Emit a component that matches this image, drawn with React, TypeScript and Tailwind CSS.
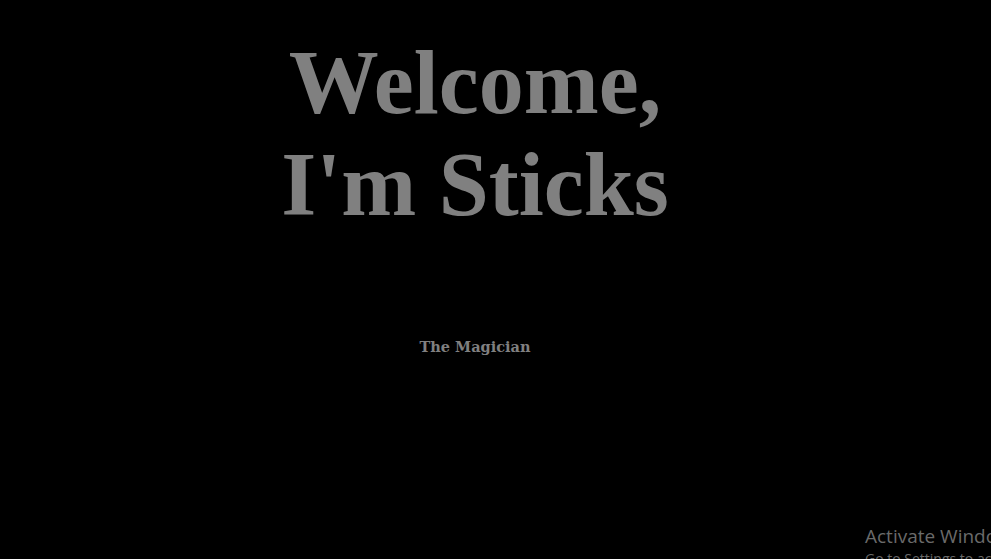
import React from "react";

export default function App() {
  return (
    <div className="relative h-[559px] w-[991px] overflow-hidden bg-black">
      <div className="w-[950px] pt-[32px] text-center">
        <h1
          className="text-[90px] font-bold leading-[102px] text-[#808080]"
          style={{ fontFamily: '"Liberation Serif", serif' }}
        >
          Welcome,
          <br />
          I'm Sticks
        </h1>
        <p
          className="mt-[100px] text-[14.5px] font-bold text-[#808080]"
          style={{ fontFamily: '"DejaVu Serif", serif' }}
        >
          The Magician
        </p>
      </div>
      <div
        className="absolute left-[865px] top-[523px] whitespace-nowrap text-[#6a6a6a]"
        style={{ fontFamily: '"Open Sans", sans-serif' }}
      >
        <div className="text-[19px] leading-[26px]">Activate Windows</div>
        <div className="text-[14px] leading-[20px]">Go to Settings to activate Windows.</div>
      </div>
    </div>
  );
}
